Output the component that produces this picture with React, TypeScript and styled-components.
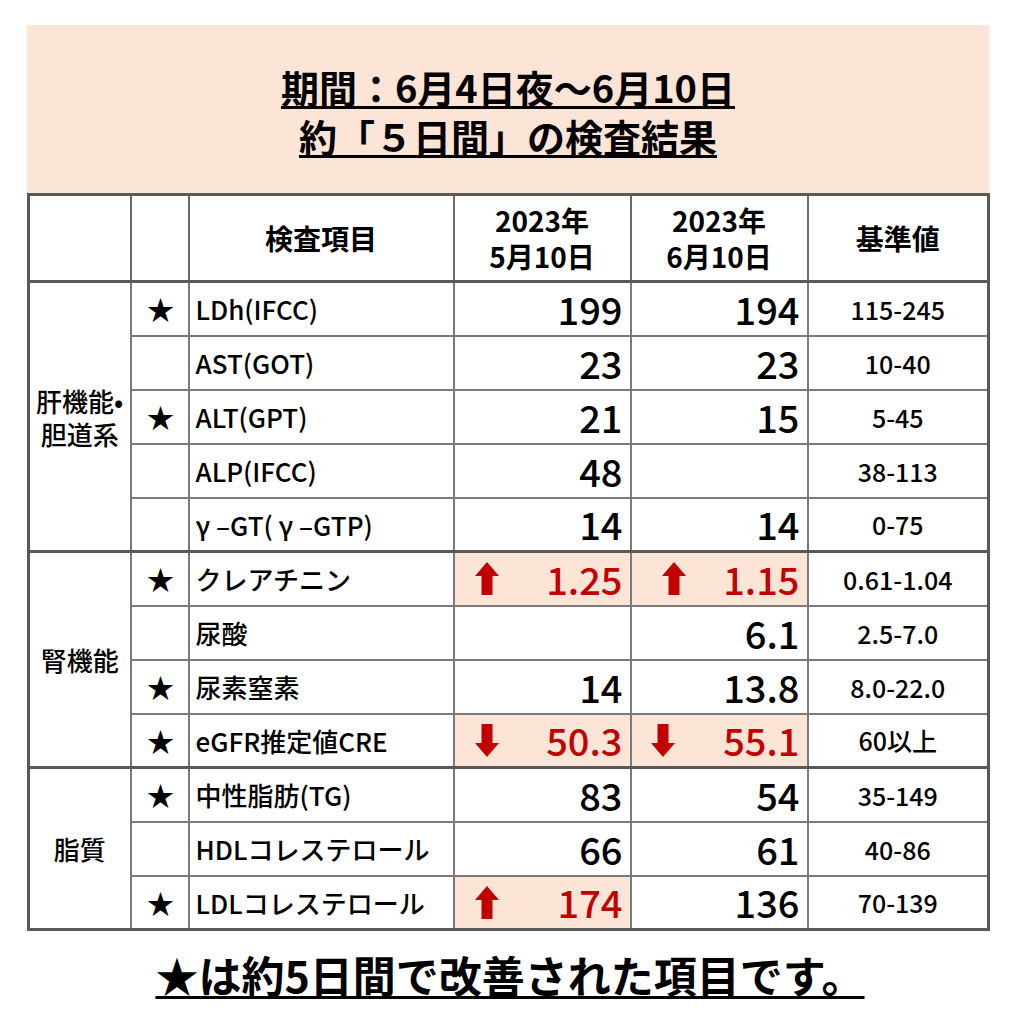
import React from "react";
import styled, { createGlobalStyle } from "styled-components";

const GlobalStyle = createGlobalStyle`
  html, body { margin: 0; padding: 0; background: #ffffff; }
  body { font-family: "Noto Sans CJK JP", "Noto Sans", sans-serif; color: #000; }
`;

const Page = styled.div`
  width: 1013px;
  padding: 25px 0 0 27px;
  box-sizing: border-box;
`;

const Sheet = styled.div`
  width: 962px;
  display: flex;
  flex-direction: column;
`;

const TitleBox = styled.div`
  height: 168px;
  background: #fce4d6;
  display: flex;
  flex-direction: column;
  align-items: center;
  justify-content: center;
  padding-top: 4px;
  box-sizing: border-box;
`;

const TitleLine = styled.div`
  font-size: 38px;
  font-weight: 700;
  line-height: 49px;
  text-decoration: underline;
  text-decoration-thickness: 3px;
  text-underline-offset: 3px;
  white-space: nowrap;
`;

const Table = styled.table`
  border-collapse: collapse;
  table-layout: fixed;
  width: 960px;
  border: 3px solid #595959;
`;

const HeadCell = styled.th`
  height: 84px;
  padding: 0;
  border: 2px solid #6b6b6b;
  border-bottom: 3px solid #595959;
  font-size: 28px;
  font-weight: 700;
  line-height: 36px;
  text-align: center;
  vertical-align: middle;
`;

const Row = styled.tr<{ $groupStart?: boolean }>`
  height: 54px;
  td {
    border-top: ${(p) => (p.$groupStart ? "3px solid #595959" : "2px solid #7a7a7a")};
  }
`;

const Cell = styled.td`
  padding: 0;
  border: 2px solid #7a7a7a;
  vertical-align: middle;
`;

const CategoryCell = styled(Cell)`
  font-size: 26px;
  font-weight: 500;
  line-height: 33px;
  text-align: center;
  white-space: nowrap;
`;

const StarCell = styled(Cell)`
  font-size: 27px;
  text-align: center;
  padding-left: 2px;
`;

const ItemCell = styled(Cell)`
  font-size: 26px;
  font-weight: 500;
  padding-left: 6px;
  white-space: nowrap;
  overflow: hidden;
`;

const ValueCell = styled(Cell)<{ $alert?: boolean }>`
  background: ${(p) => (p.$alert ? "#fce4d6" : "#ffffff")};
`;

const ValueInner = styled.div<{ $alert?: boolean; $arrowGap: number }>`
  display: flex;
  align-items: center;
  justify-content: space-between;
  padding: 0 7px 0 ${(p) => p.$arrowGap}px;
  font-size: 38px;
  font-weight: 500;
  line-height: 50px;
  color: ${(p) => (p.$alert ? "#c00000" : "#000000")};
`;

const Spacer = styled.span``;

const RangeCell = styled(Cell)`
  font-size: 25px;
  font-weight: 500;
  text-align: center;
`;

const Footer = styled.div`
  display: flex;
  justify-content: center;
  padding-top: 18px;
  padding-left: 4px;
`;

const FooterText = styled.span`
  font-size: 43px;
  font-weight: 700;
  line-height: 50px;
  text-decoration: underline;
  text-decoration-thickness: 3px;
  text-underline-offset: 3px;
  white-space: nowrap;
`;

const ArrowSvg = styled.svg`
  display: block;
  flex: none;
`;

const Arrow = ({ dir }: { dir: "up" | "down" }) => (
  <ArrowSvg width="24" height="33" viewBox="0 0 24 33">
    <polygon
      points="12,0 24,14 17.5,14 17.5,33 6.5,33 6.5,14 0,14"
      fill="#c00000"
      transform={dir === "down" ? "rotate(180 12 16.5)" : undefined}
    />
  </ArrowSvg>
);

type Val = { v: string; alert?: "up" | "down"; gap?: number };
type Item = { star: boolean; name: string; a: Val; b: Val; range: string };
type Group = { label: React.ReactNode; items: Item[] };

const groups: Group[] = [
  {
    label: (
      <>
        肝機能•
        <br />
        胆道系
      </>
    ),
    items: [
      { star: true, name: "LDh(IFCC)", a: { v: "199" }, b: { v: "194" }, range: "115-245" },
      { star: false, name: "AST(GOT)", a: { v: "23" }, b: { v: "23" }, range: "10-40" },
      { star: true, name: "ALT(GPT)", a: { v: "21" }, b: { v: "15" }, range: "5-45" },
      { star: false, name: "ALP(IFCC)", a: { v: "48" }, b: { v: "" }, range: "38-113" },
      { star: false, name: "γ –GT( γ –GTP)", a: { v: "14" }, b: { v: "14" }, range: "0-75" },
    ],
  },
  {
    label: "腎機能",
    items: [
      {
        star: true,
        name: "クレアチニン",
        a: { v: "1.25", alert: "up", gap: 20 },
        b: { v: "1.15", alert: "up", gap: 30 },
        range: "0.61-1.04",
      },
      { star: false, name: "尿酸", a: { v: "" }, b: { v: "6.1" }, range: "2.5-7.0" },
      { star: true, name: "尿素窒素", a: { v: "14" }, b: { v: "13.8" }, range: "8.0-22.0" },
      {
        star: true,
        name: "eGFR推定値CRE",
        a: { v: "50.3", alert: "down", gap: 20 },
        b: { v: "55.1", alert: "down", gap: 19 },
        range: "60以上",
      },
    ],
  },
  {
    label: "脂質",
    items: [
      { star: true, name: "中性脂肪(TG)", a: { v: "83" }, b: { v: "54" }, range: "35-149" },
      { star: false, name: "HDLコレステロール", a: { v: "66" }, b: { v: "61" }, range: "40-86" },
      {
        star: true,
        name: "LDLコレステロール",
        a: { v: "174", alert: "up", gap: 20 },
        b: { v: "136" },
        range: "70-139",
      },
    ],
  },
];

const Value = ({ val }: { val: Val }) => (
  <ValueCell $alert={!!val.alert}>
    <ValueInner $alert={!!val.alert} $arrowGap={val.gap ?? 0}>
      {val.alert ? <Arrow dir={val.alert} /> : <Spacer />}
      <span>{val.v}</span>
    </ValueInner>
  </ValueCell>
);

export default function App() {
  return (
    <>
      <GlobalStyle />
      <Page>
        <Sheet>
          <TitleBox>
            <TitleLine>期間：6月4日夜～6月10日</TitleLine>
            <TitleLine>約「５日間」の検査結果</TitleLine>
          </TitleBox>
          <Table>
            <colgroup>
              <col style={{ width: 102 }} />
              <col style={{ width: 58 }} />
              <col style={{ width: 265 }} />
              <col style={{ width: 177 }} />
              <col style={{ width: 177 }} />
              <col style={{ width: 181 }} />
            </colgroup>
            <thead>
              <tr>
                <HeadCell />
                <HeadCell />
                <HeadCell>検査項目</HeadCell>
                <HeadCell>
                  2023年
                  <br />
                  5月10日
                </HeadCell>
                <HeadCell>
                  2023年
                  <br />
                  6月10日
                </HeadCell>
                <HeadCell>基準値</HeadCell>
              </tr>
            </thead>
            <tbody>
              {groups.map((g, gi) =>
                g.items.map((it, i) => (
                  <Row key={`${gi}-${i}`} $groupStart={i === 0 && gi > 0}>
                    {i === 0 && <CategoryCell rowSpan={g.items.length}>{g.label}</CategoryCell>}
                    <StarCell>{it.star ? "★" : ""}</StarCell>
                    <ItemCell>{it.name}</ItemCell>
                    <Value val={it.a} />
                    <Value val={it.b} />
                    <RangeCell>{it.range}</RangeCell>
                  </Row>
                ))
              )}
            </tbody>
          </Table>
          <Footer>
            <FooterText>★は約5日間で改善された項目です。</FooterText>
          </Footer>
        </Sheet>
      </Page>
    </>
  );
}
